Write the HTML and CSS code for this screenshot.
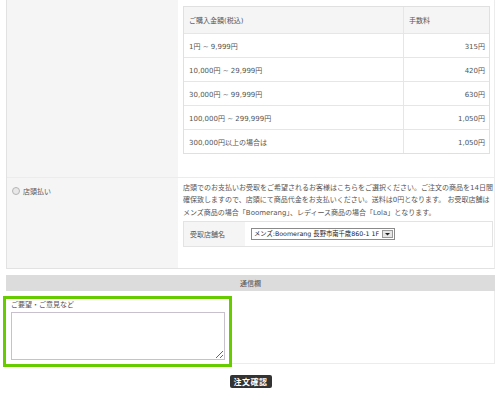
FILE: index.html
```html
<!DOCTYPE html>
<html lang="ja">
<head>
    <meta charset="UTF-8">
    <meta name="viewport" content="width=device-width, initial-scale=1.0">
    <title>お支払い方法</title>
    <link rel="stylesheet" href="styles.css">
</head>
<body>
    <div class="page">
        <div class="pay-table">
            <div class="pay-row">
                <div class="pay-label"></div>
                <div class="pay-body pay-body-fee">
                    <div class="fee-table">
                        <div class="fee-row fee-head">
                            <div class="fee-range">ご購入金額(税込)</div>
                            <div class="fee-cost fee-cost-head">手数料</div>
                        </div>
                        <div class="fee-row">
                            <div class="fee-range">1円 ~ 9,999円</div>
                            <div class="fee-cost">315円</div>
                        </div>
                        <div class="fee-row">
                            <div class="fee-range">10,000円 ~ 29,999円</div>
                            <div class="fee-cost">420円</div>
                        </div>
                        <div class="fee-row">
                            <div class="fee-range">30,000円 ~ 99,999円</div>
                            <div class="fee-cost">630円</div>
                        </div>
                        <div class="fee-row">
                            <div class="fee-range">100,000円 ~ 299,999円</div>
                            <div class="fee-cost">1,050円</div>
                        </div>
                        <div class="fee-row">
                            <div class="fee-range">300,000円以上の場合は</div>
                            <div class="fee-cost">1,050円</div>
                        </div>
                    </div>
                </div>
            </div>

            <div class="pay-row pay-row-store">
                <div class="pay-label">
                    <label class="radio-label">
                        <input type="radio" name="payment" class="radio">
                        <span>店頭払い</span>
                    </label>
                </div>
                <div class="pay-body pay-body-store">
                    <p class="store-note">店頭でのお支払いお受取をご希望されるお客様はこちらをご選択ください。ご注文の商品を14日間<br>確保致しますので、店頭にて商品代金をお支払いください。送料は0円となります。 お受取店舗は<br>メンズ商品の場合「Boomerang」、レディース商品の場合「Lola」となります。</p>
                    <div class="store-table">
                        <div class="store-label">受取店舗名</div>
                        <div class="store-field">
                            <div class="fake-select">
                                <span class="fake-select-text">メンズ:Boomerang 長野市南千歳860-1 1F</span>
                                <span class="fake-select-btn">
                                    <svg width="9" height="6" viewBox="0 0 9 6"><path d="M2 2h5L4.5 4.5z" fill="#222"/></svg>
                                </span>
                            </div>
                        </div>
                    </div>
                </div>
            </div>
        </div>

        <div class="comment-box">
            <div class="comment-head">通信欄</div>
            <div class="comment-row">
                <div class="comment-cell">
                    <label class="comment-label" for="comment">ご要望・ご意見など</label>
                    <textarea id="comment" class="comment-input"></textarea>
                </div>
                <div class="comment-rest"></div>
            </div>
        </div>

        <div class="submit-wrap">
            <button type="button" class="submit-btn">注文確認</button>
        </div>
    </div>
</body>
</html>
```

FILE: styles.css
```css
body {
    margin: 0;
    background: #fff;
    font-family: "DejaVu Sans", "Noto Sans CJK JP", sans-serif;
    font-size: 7px;
    color: #555;
}
.page {
    padding: 0 5px 0 6px;
}
.pay-table {
    border-left: 1px solid #e2e2e2;
    border-right: 1px solid #ececec;
    border-bottom: 1px solid #e2e2e2;
}
.pay-row {
    display: flex;
}
.pay-row-store {
    border-top: 1px solid #ececec;
}
.pay-label {
    width: 171px;
    flex-shrink: 0;
    background: #f5f5f5;
}
.pay-body {
    flex: 1;
    padding: 0 4px 0 5px;
}
.pay-body-fee {
    padding-top: 6px;
    padding-bottom: 23px;
}
.fee-table {
    border: 1px solid #e0e0e0;
}
.fee-row {
    display: grid;
    grid-template-columns: 219px 1fr;
    height: 24px;
    box-sizing: border-box;
    border-top: 1px solid #e6e6e6;
}
.fee-row.fee-head {
    height: 26px;
    border-top: none;
    background: #f5f5f5;
}
.fee-range,
.fee-cost {
    display: flex;
    align-items: center;
    padding: 0 5px;
}
.fee-cost {
    justify-content: flex-end;
    border-left: 1px solid #e6e6e6;
    padding-right: 4px;
}
.fee-cost-head {
    justify-content: flex-start;
}

.pay-row-store .pay-label {
    padding: 8px 0 0 5px;
    box-sizing: border-box;
}
.radio-label {
    display: flex;
    align-items: center;
    gap: 3px;
}
.radio {
    appearance: none;
    margin: 0;
    width: 8px;
    height: 8px;
    border-radius: 50%;
    border: 1px solid #b5b5b5;
    background: #e8e8e8;
    box-sizing: border-box;
}
.pay-body-store {
    padding-top: 4px;
    padding-bottom: 21px;
}
.store-note {
    margin: 0 0 2px;
    line-height: 12.3px;
    white-space: nowrap;
}
.store-table {
    display: flex;
    height: 26px;
    border: 1px solid #e3e3e3;
    box-sizing: border-box;
}
.store-label {
    width: 61px;
    background: #f5f5f5;
    display: flex;
    align-items: center;
    padding-left: 6px;
    box-sizing: border-box;
}
.store-field {
    flex: 1;
    display: flex;
    align-items: center;
    padding-left: 6px;
}
.fake-select {
    display: flex;
    align-items: center;
    height: 10px;
    border: 1px solid #8a8a8a;
    background: #fff;
    color: #222;
    font-size: 6.3px;
    padding-left: 2px;
}
.fake-select-text {
    padding-right: 3px;
}
.fake-select-btn {
    display: flex;
    align-items: center;
    justify-content: center;
    width: 11px;
    height: 8px;
    margin-right: 1px;
    border: 1px solid #999;
    background: #e6e6e6;
    box-sizing: border-box;
}

.comment-box {
    margin-top: 6px;
}
.comment-head {
    background: #dcdcdc;
    height: 16px;
    display: flex;
    align-items: center;
    justify-content: center;
    color: #555;
}
.comment-row {
    display: flex;
    margin-top: 5px;
}
.comment-cell {
    width: 229px;
    margin-left: -3px;
    flex-shrink: 0;
    border: 3px solid #66cc00;
    box-sizing: border-box;
    padding: 1px 4px 4px 5px;
    background: #fff;
}
.comment-label {
    display: block;
    line-height: 10px;
    margin-bottom: 2px;
}
.comment-input {
    display: block;
    width: 214px;
    height: 48px;
    margin: 0;
    border: 1px solid #c8c0cc;
    box-sizing: border-box;
    resize: both;
}
.comment-rest {
    flex: 1;
    border-right: 1px solid #ececec;
    border-bottom: 1px solid #ececec;
    margin-top: -5px;
    margin-bottom: 3px;
}
.submit-wrap {
    display: flex;
    justify-content: center;
    padding-top: 8px;
}
.submit-btn {
    background: #333;
    color: #fff;
    border: none;
    border-radius: 2px;
    font-family: "Noto Sans CJK JP", sans-serif;
    font-weight: bold;
    font-size: 8px;
    padding: 1px 4px;
    line-height: 11px;
    letter-spacing: 0.5px;
    cursor: pointer;
}
```
